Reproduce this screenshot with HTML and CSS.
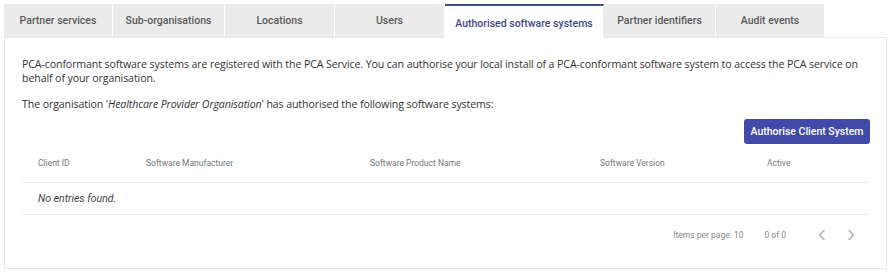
FILE: index.html
```html
<html lang="en">
<head>
    <meta charset="UTF-8">
    <meta name="viewport" content="width=device-width, initial-scale=1.0">
    <title>Authorised software systems</title>
    <link rel="stylesheet" href="styles.css">
</head>
<body>
    <div class="tabs">
        <div class="tab">Partner services</div>
        <div class="tab">Sub-organisations</div>
        <div class="tab">Locations</div>
        <div class="tab">Users</div>
        <div class="tab active">Authorised software systems</div>
        <div class="tab">Partner identifiers</div>
        <div class="tab">Audit events</div>
    </div>
    <div class="panel">
        <p class="intro">PCA-conformant software systems are registered with the PCA Service. You can authorise your local install of a PCA-conformant software system to access the PCA service on behalf of your organisation.</p>
        <p class="intro last">The organisation '<em>Healthcare Provider Organisation</em>' has authorised the following software systems:</p>
        <div class="actions">
            <button class="primary">Authorise Client System</button>
        </div>
        <table class="grid">
            <thead>
                <tr>
                    <th class="col-id">Client ID</th>
                    <th class="col-man">Software Manufacturer</th>
                    <th class="col-name">Software Product Name</th>
                    <th class="col-ver">Software Version</th>
                    <th class="col-act">Active</th>
                </tr>
            </thead>
            <tbody>
                <tr>
                    <td colspan="5" class="empty">No entries found.</td>
                </tr>
            </tbody>
        </table>
        <div class="paginator">
            <span class="per-page">Items per page: 10</span>
            <span class="range">0 of 0</span>
            <span class="nav">
                <svg width="24" height="24" viewBox="0 0 24 24"><path d="M14.5 7 L9.5 12 L14.5 17" fill="none" stroke="#b0b0b0" stroke-width="1.4"/></svg>
                <svg width="24" height="24" viewBox="0 0 24 24"><path d="M9.5 7 L14.5 12 L9.5 17" fill="none" stroke="#b0b0b0" stroke-width="1.4"/></svg>
            </span>
        </div>
    </div>
</body>
</html>
```

FILE: styles.css
```css
body {
    margin: 0;
    padding: 4px 5px 0 4px;
    background: #fff;
    font-family: Roboto, "Liberation Sans", sans-serif;
}

.tabs {
    display: flex;
    height: 33px;
}

.tab {
    height: 33px;
    line-height: 33px;
    background-color: #ebebeb;
    color: #5a5a5a;
    font-size: 10.5px;
    font-weight: 500;
    text-align: center;
    border-right: 1px solid #fff;
    box-sizing: border-box;
}

.tab:nth-child(1) { width: 109px; }
.tab:nth-child(2) { width: 112px; }
.tab:nth-child(3) { width: 110px; }
.tab:nth-child(4) { width: 110px; }
.tab:nth-child(5) { width: 159px; }
.tab:nth-child(6) { width: 112px; }
.tab:nth-child(7) { width: 109px; }

.tab.active {
    background-color: #fff;
    color: #3b4a8c;
    border-top: 2px solid #3b4a8c;
    border-right-color: #ebebeb;
    line-height: 35px;
    height: 34px;
    position: relative;
    z-index: 1;
}

.panel {
    border: 1px solid #e6e6e6;
    border-top: 1px solid #ebebeb;
    padding: 15px 16px 0 17px;
    height: 215px;
}

.intro {
    font-family: "Open Sans", sans-serif;
    font-size: 10.6px;
    letter-spacing: -0.1px;
    line-height: 14px;
    color: #333;
    margin: 4px 0 12px 0;
}

.intro.last {
    margin-bottom: 8px;
}

.actions {
    display: flex;
    justify-content: flex-end;
}

.primary {
    height: 25px;
    width: 126px;
    background-color: #4149a9;
    color: #fff;
    border: none;
    border-radius: 3px;
    font-family: Roboto, sans-serif;
    font-size: 10.5px;
    font-weight: 500;
    cursor: pointer;
}

.grid {
    width: 100%;
    border-collapse: collapse;
}

.grid th {
    font-size: 8.5px;
    font-weight: 400;
    color: #777;
    text-align: left;
    height: 38px;
    padding: 0;
    border-bottom: 1px solid #ececec;
}

.grid th.col-id { width: 108px; padding-left: 16px; }
.col-man { width: 224px; }
.col-name { width: 230px; }
.col-ver { width: 167px; }

.empty {
    font-size: 10.5px;
    font-style: italic;
    color: #444;
    height: 32px;
    padding: 0 0 0 16px;
    border-bottom: 1px solid #ececec;
}

.paginator {
    display: flex;
    justify-content: flex-end;
    align-items: center;
    height: 40px;
    font-size: 8.5px;
    color: #888;
    padding-right: 7px;
}

.range {
    margin-left: 21px;
}

.nav {
    display: flex;
    gap: 5px;
    margin-left: 24px;
}
```
